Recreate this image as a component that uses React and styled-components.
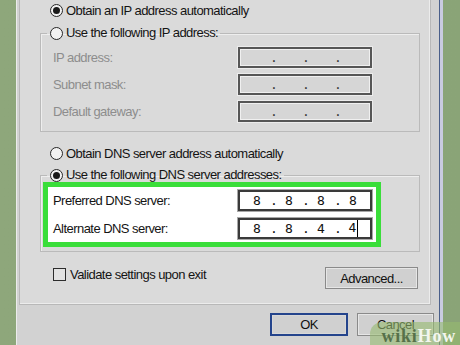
import React from 'react';
import styled, { createGlobalStyle } from 'styled-components';

const GlobalStyle = createGlobalStyle`
  html, body {
    margin: 0;
    padding: 0;
    background: #8ca679;
  }
  * { box-sizing: border-box; }
`;

// whole photographed area
const Screen = styled.div`
  position: relative;
  display: flex;
  width: 460px;
  height: 345px;
  overflow: hidden;
  padding-left: 16px;
  background: linear-gradient(90deg, #8ea77b 0%, #8aa477 100%);
  font-family: "Liberation Sans", Arial, sans-serif;
  font-size: 13px;
  letter-spacing: -0.55px;
  color: #141414;
`;

// dialog window
const Window = styled.div`
  display: flex;
  flex-direction: column;
  width: 424px;
  height: 100%;
  background: #d2d2d2;
  border-left: 1px solid #ececec;
  border-right: 1px solid #4a5f8a;
  box-shadow: 3px 0 0 #c9cbe0;
`;

const TabPage = styled.div`
  display: flex;
  flex-direction: column;
  margin: 0 8px 0 2px;
  height: 305px;
  background: #dadada;
  border: 1px solid #b8b8b8;
  border-top: none;
  box-shadow: inset -1px -1px 0 #ececec;
`;

const OptionRow = styled.label`
  display: flex;
  align-items: center;
  gap: 3px;
  height: 20px;
  padding-left: 30px;
  margin-top: ${p => p.$top || 0}px;
`;

const Radio = styled.span`
  display: grid;
  place-items: center;
  width: 13px;
  height: 13px;
  border-radius: 50%;
  border: 1.5px solid #262626;
  background: #f2f2f2;
  &::after {
    content: '';
    width: 7px;
    height: 7px;
    border-radius: 50%;
    background: ${p => (p.$checked ? '#1a1a1a' : 'transparent')};
  }
`;

const GroupBox = styled.fieldset`
  margin: ${p => p.$top}px 10px 0 20px;
  padding: ${p => p.$pad};
  border: 1px solid #bababa;
  box-shadow: inset 1px 1px 0 #eeeeee;
  min-width: 0;
`;

const Legend = styled.legend`
  display: flex;
  align-items: center;
  gap: 3px;
  padding: 0 2px 0 3px;
  line-height: 16px;
  height: 16px;
`;

const FieldGrid = styled.div`
  display: grid;
  grid-template-columns: 185px 134px;
  row-gap: ${p => p.$gap}px;
  align-items: center;
  padding-left: ${p => p.$left}px;
`;

const FieldLabel = styled.span`
  color: ${p => (p.$disabled ? '#8d8d8d' : '#141414')};
`;

const Highlight = styled.div`
  margin: -1px 0 0 -4px;
  width: 338px;
  padding: 3px 4px 3px 5px;
  border: 5px solid #3ade3a;
  background: #ffffff;
`;

const IpBox = styled.div`
  display: flex;
  align-items: center;
  width: 134px;
  height: 21px;
  padding-left: 4px;
  border: 2px solid ${p => (p.$disabled ? '#565656' : '#3a3a3a')};
  background: ${p => (p.$disabled ? '#d6d6d6' : '#ffffff')};
  box-shadow: ${p => (p.$disabled ? 'inset 0 0 0 1px #f0f0f0, 0 0 0 1px #ececec' : '0 0 0 1px #a8a8a8')};
  font-family: "DejaVu Sans Mono", "Liberation Mono", monospace;
  font-size: 13px;
  letter-spacing: 0;
  color: #111;
`;

const Octet = styled.span`
  width: 26px;
  text-align: center;
`;

const Dot = styled.span`
  width: 6px;
  text-align: center;
  color: ${p => (p.$disabled ? '#3c3c3c' : '#111')};
`;

const Caret = styled.span`
  display: inline-block;
  width: 0;
  height: 17px;
  margin-left: 1px;
  margin-right: -1px;
  vertical-align: middle;
  border-left: 1.5px solid #000;
`;

const BottomRow = styled.div`
  display: flex;
  align-items: flex-start;
  justify-content: space-between;
  margin: 12px 12px 0 33px;
`;

const CheckRow = styled.label`
  display: flex;
  align-items: center;
  gap: 4px;
  height: 20px;
`;

const CheckBox = styled.span`
  width: 13px;
  height: 13px;
  border: 1px solid #2c2c2c;
  background: #e2e2e2;
`;

const Button = styled.div`
  display: flex;
  align-items: center;
  justify-content: center;
  width: ${p => p.$w}px;
  height: ${p => p.$h}px;
  margin-top: ${p => p.$top || 0}px;
  background: #d0d0d0;
  border: ${p => (p.$primary ? '2px solid #24448c' : '1px solid #8a8a8a')};
  box-shadow: inset 0 0 0 1px ${p => (p.$primary ? '#d8d8d8' : '#e6e6e6')};
  color: #111;
`;

const ButtonBar = styled.div`
  display: flex;
  justify-content: flex-end;
  gap: 9px;
  padding: 8px 5px 0 0;
`;

const Watermark = styled.div`
  position: absolute;
  left: 370px;
  top: 322px;
  right: 0;
  bottom: 0;
  display: flex;
  align-items: flex-end;
  justify-content: flex-end;
  padding: 0 4px 0 0;
  border-top-left-radius: 12px;
  background: rgba(150, 186, 112, 0.6);
  font-family: "Liberation Serif", "Times New Roman", serif;
  font-weight: bold;
  font-size: 18px;
  letter-spacing: 0.8px;
  line-height: 18px;
`;

const Wiki = styled.span`
  color: #56714a;
`;

const How = styled.span`
  color: #f3f6ee;
`;

function Address({ parts, disabled, caret }) {
  const cells = parts || ['', '', '', ''];
  return (
    <IpBox $disabled={disabled}>
      {cells.map((p, i) => (
        <React.Fragment key={i}>
          <Octet>
            {p}
            {caret && i === 3 && <Caret />}
          </Octet>
          {i < 3 && <Dot $disabled={disabled}>.</Dot>}
        </React.Fragment>
      ))}
    </IpBox>
  );
}

export default function App() {
  return (
    <>
      <GlobalStyle />
      <Screen>
        <Window>
          <TabPage>
            <OptionRow>
              <Radio $checked />
              Obtain an IP address automatically
            </OptionRow>

            <GroupBox $top={5} $pad="6px 0 9px 6px">
              <Legend>
                <Radio />
                Use the following IP address:
              </Legend>
              <FieldGrid $gap={6} $left={6}>
                <FieldLabel $disabled>IP address:</FieldLabel>
                <Address disabled />
                <FieldLabel $disabled>Subnet mask:</FieldLabel>
                <Address disabled />
                <FieldLabel $disabled>Default gateway:</FieldLabel>
                <Address disabled />
              </FieldGrid>
            </GroupBox>

            <OptionRow $top={11}>
              <Radio />
              Obtain DNS server address automatically
            </OptionRow>

            <GroupBox $top={4} $pad="0 0 4px 6px">
              <Legend>
                <Radio $checked />
                Use the following DNS server addresses:
              </Legend>
              <Highlight>
                <FieldGrid $gap={7} $left={0}>
                  <FieldLabel>Preferred DNS server:</FieldLabel>
                  <Address parts={['8', '8', '8', '8']} />
                  <FieldLabel>Alternate DNS server:</FieldLabel>
                  <Address parts={['8', '8', '4', '4']} caret />
                </FieldGrid>
              </Highlight>
            </GroupBox>

            <BottomRow>
              <CheckRow>
                <CheckBox />
                Validate settings upon exit
              </CheckRow>
              <Button $w={93} $h={22} $top={3}>Advanced...</Button>
            </BottomRow>
          </TabPage>

          <ButtonBar>
            <Button $w={78} $h={23} $primary>OK</Button>
            <Button $w={77} $h={23}>Cancel</Button>
          </ButtonBar>
        </Window>
        <Watermark>
          <Wiki>wiki</Wiki>
          <How>How</How>
        </Watermark>
      </Screen>
    </>
  );
}
